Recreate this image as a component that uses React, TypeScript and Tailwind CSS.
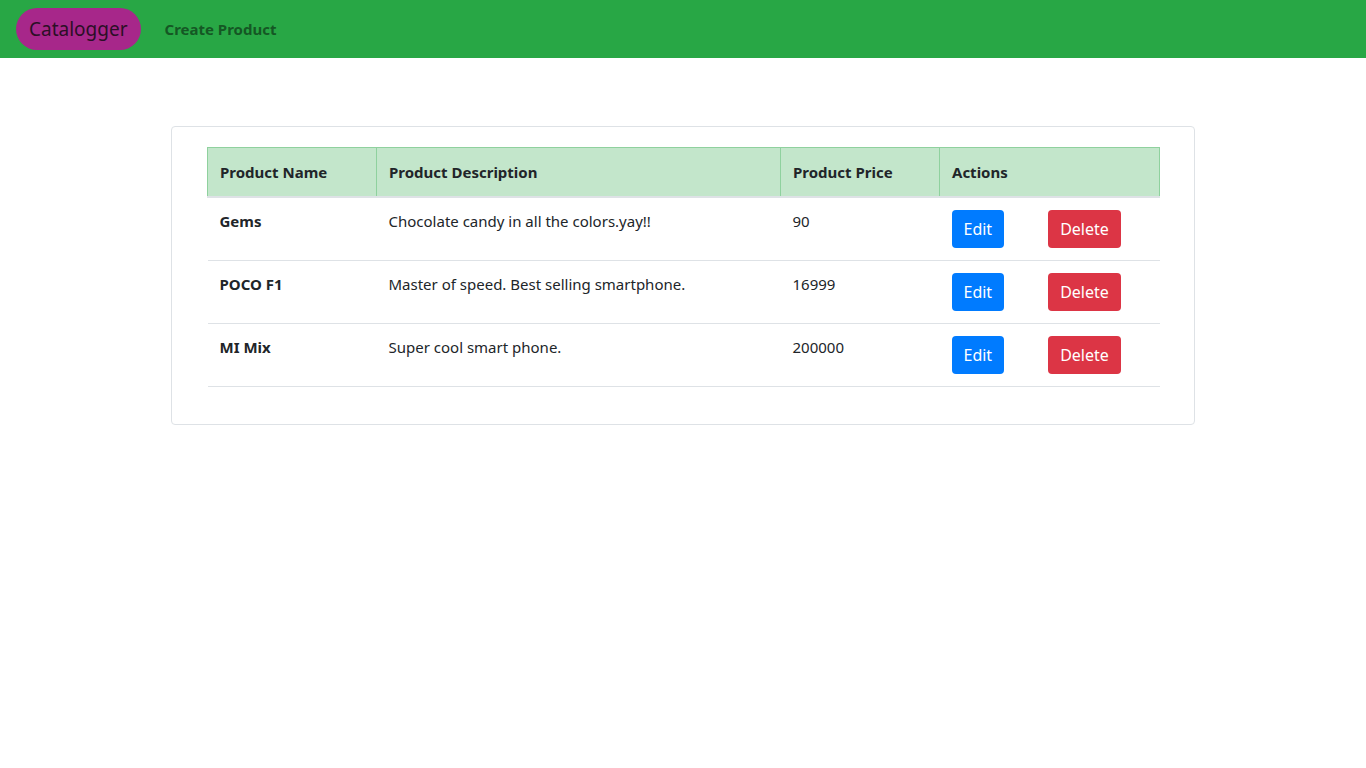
import React from 'react';

interface Product {
  name: string;
  description: string;
  price: number;
}

const products: Product[] = [
  { name: 'Gems', description: 'Chocolate candy in all the colors.yay!!', price: 90 },
  { name: 'POCO F1', description: 'Master of speed. Best selling smartphone.', price: 16999 },
  { name: 'MI Mix', description: 'Super cool smart phone.', price: 200000 },
];

const App: React.FC = () => {
  return (
    <div className="min-h-screen bg-white text-[#212529] font-['Noto_Sans',sans-serif] text-[16px] leading-[1.5]">
      <nav className="h-[58px] bg-[#28a745] flex items-center px-4">
        <span className="h-[42px] px-[13px] flex items-center rounded-full bg-[#a7278a] text-[19px] text-[#2b0f26]">
          Catalogger
        </span>
        <span className="ml-6 text-[15px] font-bold text-[#155724]">Create Product</span>
      </nav>

      <div className="pt-[68px] px-[171px]">
        <div className="border border-[#dee2e6] rounded-[4px] pt-[20px] pb-[37px] px-[35px]">
          <table className="w-full border-collapse table-fixed">
            <colgroup>
              <col className="w-[169px]" />
              <col className="w-[404px]" />
              <col className="w-[159px]" />
              <col className="w-[220px]" />
            </colgroup>
            <thead>
              <tr className="bg-[#c3e6cb]">
                {['Product Name', 'Product Description', 'Product Price', 'Actions'].map((h) => (
                  <th
                    key={h}
                    className="h-[49px] px-3 text-left font-bold border border-[#8fd19e] border-b-2 border-b-[#dee2e6] text-[15px]"
                  >
                    {h}
                  </th>
                ))}
              </tr>
            </thead>
            <tbody>
              {products.map((p) => (
                <tr key={p.name} className="border-b border-[#dee2e6]">
                  <td className="p-3 align-top font-bold text-[15px]">{p.name}</td>
                  <td className="p-3 align-top text-[15px]">{p.description}</td>
                  <td className="p-3 align-top text-[15px]">{p.price}</td>
                  <td className="p-3 align-top">
                    <div className="flex">
                      <button className="h-[38px] px-3 rounded-[4px] bg-[#007bff] text-white text-[16px]">Edit</button>
                      <button className="ml-[44px] h-[38px] px-3 rounded-[4px] bg-[#dc3545] text-white text-[16px]">Delete</button>
                    </div>
                  </td>
                </tr>
              ))}
            </tbody>
          </table>
        </div>
      </div>
    </div>
  );
};

export default App;
